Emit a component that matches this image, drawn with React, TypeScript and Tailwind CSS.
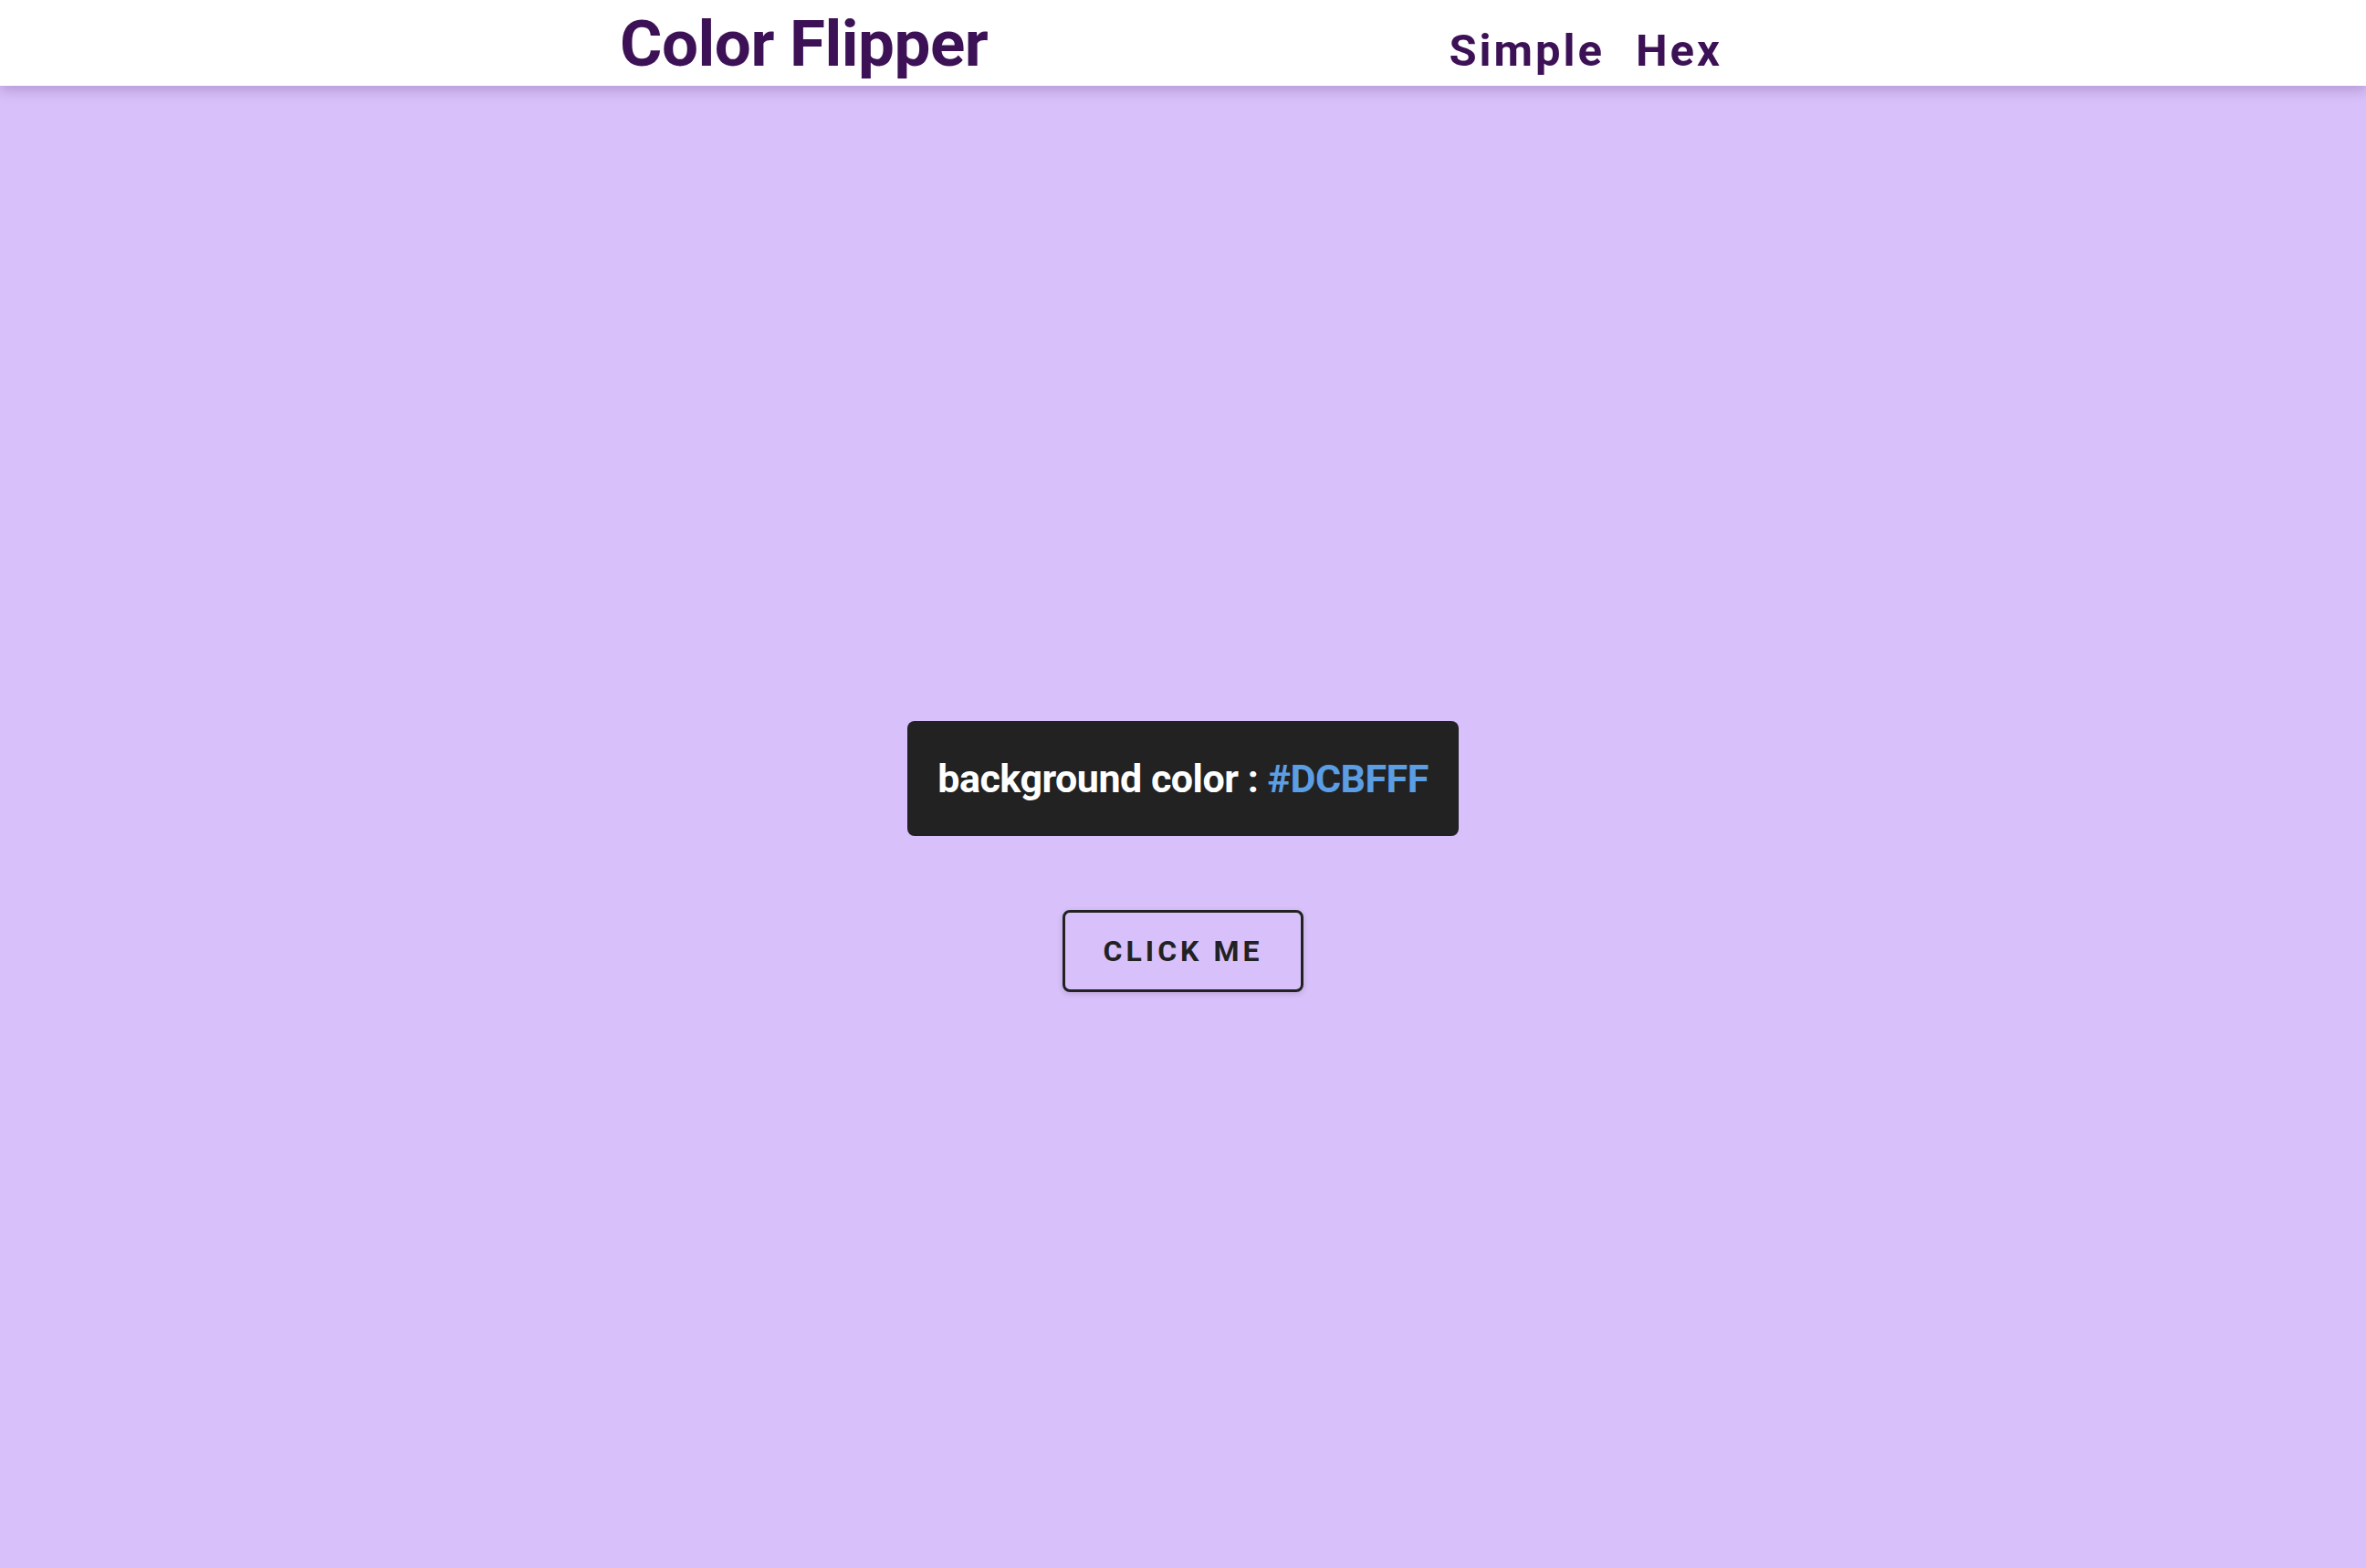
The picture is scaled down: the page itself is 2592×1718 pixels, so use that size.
import React from 'react';

const font = { fontFamily: 'Roboto, "Liberation Sans", sans-serif' };

const App = () => (
  <div className="min-h-screen bg-[#d8c0fa]" style={font}>
    <nav className="relative z-10 h-[94px] bg-white shadow-[0_4px_14px_rgba(60,20,90,0.25)]">
      <div className="mx-auto flex h-full w-[1234px] items-center justify-between">
        <h1 className="text-[71px] font-bold leading-none tracking-[-0.5px] text-[#3d1155]">Color Flipper</h1>
        <ul className="flex items-center gap-[34px] pr-[26px] pt-[17px]">
          <li className="text-[49px] font-bold leading-none tracking-[3px] text-[#3d1155]">Simple</li>
          <li className="text-[49px] font-bold leading-none tracking-[3px] text-[#3d1155]">Hex</li>
        </ul>
      </div>
    </nav>
    <main className="flex flex-col items-center pt-[696px]">
      <div className="flex h-[126px] items-center rounded-[8px] bg-[#222222] px-[33px]">
        <h2 className="text-[43px] font-bold tracking-[-0.5px] text-white">
          background color : <span className="text-[#5b9ee3]">#DCBFFF</span>
        </h2>
      </div>
      <button className="mt-[81px] flex h-[90px] w-[264px] items-center justify-center rounded-[8px] border-[3px] border-[#222222] bg-transparent text-[32px] font-bold tracking-[4px] text-[#222222] shadow-[0_2px_6px_rgba(0,0,0,0.15)]">
        CLICK ME
      </button>
    </main>
  </div>
);

export default App;
